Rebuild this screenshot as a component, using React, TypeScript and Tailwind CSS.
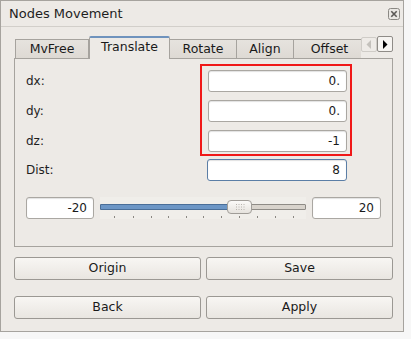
import React from "react";

const Input = ({ value, focused = false }: { value: string; focused?: boolean }) => (
  <div
    className={
      "h-[22px] bg-white rounded-[3px] border flex items-center justify-end pr-[6px] text-[12px] text-[#1a1a1a] shadow-[inset_0_1px_1px_rgba(0,0,0,0.12)] " +
      (focused ? "border-[#5b7ea6]" : "border-[#aaa7a2]")
    }
  >
    {value}
  </div>
);

const Btn = ({ label }: { label: string }) => (
  <div className="h-[23px] rounded-[3px] border border-[#9b9893] bg-gradient-to-b from-[#f8f6f3] to-[#e9e6e1] flex items-center justify-center text-[12.5px] text-[#1a1a1a]">
    {label}
  </div>
);

const Tab = ({ label, w, selected = false }: { label: string; w: number; selected?: boolean }) =>
  selected ? (
    <div
      className="h-[23px] border-x border-[#a6a39e] border-t-2 border-t-[#6f93bd] rounded-t-[2px] bg-[#edeae6] flex items-center justify-center text-[12.5px] text-[#1a1a1a] relative z-10 -mb-px pb-[2px]"
      style={{ width: w }}
    >
      {label}
    </div>
  ) : (
    <div
      className="h-[19px] border-t border-r border-[#a6a39e] bg-gradient-to-b from-[#e6e3de] to-[#dedad4] flex items-center justify-center text-[12.5px] text-[#1a1a1a]"
      style={{ width: w }}
    >
      {label}
    </div>
  );

const ticks = [14, 33, 51, 68, 86, 103, 121, 139, 157, 175, 193];

const Slider = () => (
  <div className="relative w-[206px] h-[22px] bg-[#f0eeea]">
    <div className="absolute left-0 top-[7px] w-[206px] h-[6px] border border-[#8e8b86] bg-[#d8d3cc] rounded-[1px]" />
    <div className="absolute left-0 top-[7px] w-[132px] h-[6px] border border-[#4a6e98] bg-[#6c96c6] rounded-[1px]" />
    <div className="absolute left-[127px] top-[3px] w-[25px] h-[14px] rounded-[4px] border border-[#a09d98] bg-gradient-to-b from-[#fbfaf8] to-[#e6e3de] flex items-center justify-center">
      <svg width="10" height="8" viewBox="0 0 10 8">
        {[0, 1, 2].map((r) =>
          [0, 1, 2, 3].map((c) => (
            <rect key={r + "-" + c} x={1 + c * 2.5} y={1 + r * 2.5} width="1" height="1" fill="#b8b4ae" />
          ))
        )}
      </svg>
    </div>
    {ticks.map((t) => (
      <div key={t} className="absolute top-[19px] w-px h-[2px] bg-[#8a8782]" style={{ left: t }} />
    ))}
  </div>
);

export default function App() {
  return (
    <div className="w-[411px] h-[339px] bg-[#f7f7f7] font-['DejaVu_Sans',sans-serif]">
      <div className="w-[404px] h-[332px] bg-[#edeae6] border border-[#a6a39e] flex flex-col">
        <div className="h-[26px] border-b border-[#d2cfca] flex items-center justify-between pl-[8px] pr-[3px]">
          <span className="text-[13px] text-[#1e1e1e]">Nodes Movement</span>
          <svg width="12" height="12" viewBox="0 0 12 12">
            <rect x="0.5" y="0.5" width="11" height="11" rx="2" fill="#e9e7e3" stroke="#8a8883" />
            <path d="M3.3 3.3 L8.7 8.7 M8.7 3.3 L3.3 8.7" stroke="#5a5855" strokeWidth="1.6" />
          </svg>
        </div>
        <div className="flex-1 flex flex-col pl-[13px] pr-[10px]">
          <div className="mt-[9px] h-[22px] flex items-end">
            <div className="w-px h-[19px]" />
            <div className="flex items-end border-l border-[#a6a39e] h-[19px]" />
            <Tab label="MvFree" w={73} />
            <Tab label="Translate" w={81} selected />
            <Tab label="Rotate" w={67} />
            <Tab label="Align" w={57} />
            <div className="w-[67px] h-[19px] border-t border-[#a6a39e] bg-gradient-to-b from-[#e6e3de] to-[#dedad4] flex items-center justify-center text-[12.5px] text-[#1a1a1a] pl-[4px]">
              Offset
            </div>
            <div className="flex-1 h-[22px] flex items-start">
              <div className="mt-[1px] w-[16px] h-[15px] border border-[#cfccc7] rounded-[2px] bg-[#eeebe7] flex items-center justify-center">
                <svg width="6" height="9" viewBox="0 0 6 9">
                  <path d="M5 0 L0.5 4.5 L5 9 Z" fill="#c4c1bc" />
                </svg>
              </div>
              <div className="w-[16px] h-[16px] border border-[#8f8c87] rounded-[2px] bg-[#f6f4f1] flex items-center justify-center">
                <svg width="6" height="9" viewBox="0 0 6 9">
                  <path d="M1 0 L5.5 4.5 L1 9 Z" fill="#000" />
                </svg>
              </div>
            </div>
          </div>
          <div className="h-[189px] border border-[#a6a39e] flex flex-col pl-[11px] pr-[45px] pt-[11px]">
            <div className="relative flex flex-col gap-[8px]">
              <div className="absolute right-[-5px] top-[-6px] w-[152px] h-[92px] border-2 border-[#f01818] pointer-events-none" />
              {[
                ["dx:", "0."],
                ["dy:", "0."],
                ["dz:", "-1"],
              ].map(([l, v]) => (
                <div key={l} className="flex items-center">
                  <span className="flex-1 text-[12px] text-[#1e1e1e]">{l}</span>
                  <div className="w-[139px]">
                    <Input value={v} />
                  </div>
                </div>
              ))}
            </div>
            <div className="flex items-center mt-[7px]">
              <span className="flex-1 text-[12px] text-[#1e1e1e]">Dist:</span>
              <div className="w-[140px]">
                <Input value="8" focused />
              </div>
            </div>
            <div className="flex items-center gap-[6px] mt-[16px] -mr-[35px]">
              <div className="w-[68px]">
                <Input value="-20" />
              </div>
              <Slider />
              <div className="w-[69px]">
                <Input value="20" />
              </div>
            </div>
          </div>
          <div className="mt-[10px] grid grid-cols-2 gap-x-[5px] gap-y-[16px]">
            <Btn label="Origin" />
            <Btn label="Save" />
            <Btn label="Back" />
            <Btn label="Apply" />
          </div>
        </div>
      </div>
    </div>
  );
}
